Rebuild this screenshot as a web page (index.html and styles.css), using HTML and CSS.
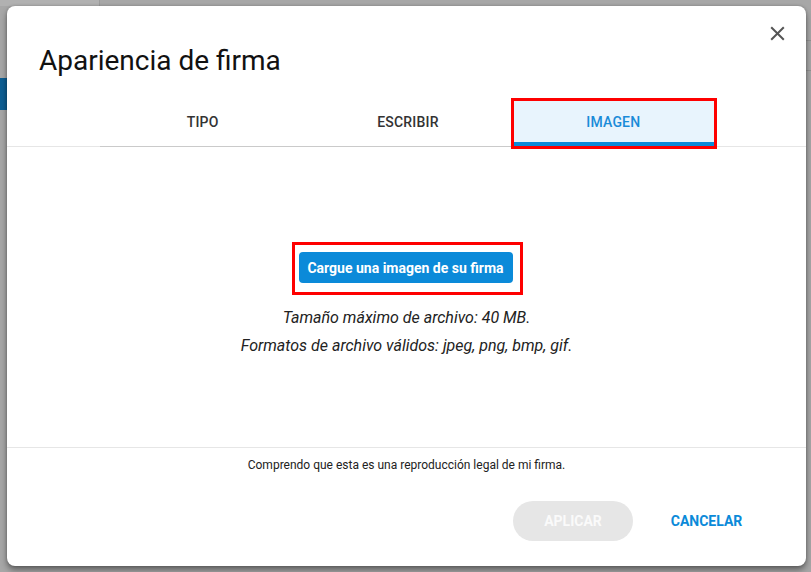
FILE: index.html
```html
<!DOCTYPE html>
<html lang="es">
<head>
<meta charset="utf-8">
<title>Apariencia de firma</title>
<link rel="stylesheet" href="styles.css">
</head>
<body>
  <div class="app">
    <div class="app-top">
      <div class="app-top-card"></div>
    </div>
    <div class="app-body">
      <div class="app-nav">
        <div class="app-nav-item"></div>
      </div>
      <div class="app-main">
        <div class="app-rule app-rule-1"></div>
        <div class="app-rule app-rule-2"></div>
      </div>
    </div>
  </div>

  <div class="overlay">
    <div class="dialog" role="dialog" aria-labelledby="dlg-title">
      <div class="dialog-header">
        <h1 id="dlg-title" class="dialog-title">Apariencia de firma</h1>
        <button class="close-btn" aria-label="Cerrar">
          <svg width="15" height="15" viewBox="0 0 15 15">
            <path d="M1.2 1.2 L13.8 13.8 M13.8 1.2 L1.2 13.8" stroke="#555" stroke-width="2" fill="none"/>
          </svg>
        </button>
      </div>

      <div class="tabs-wrap">
        <div class="tabs">
          <div class="tab">TIPO</div>
          <div class="tab">ESCRIBIR</div>
          <div class="tab tab-active">IMAGEN<span class="mark mark-tab"></span></div>
        </div>
      </div>

      <div class="dialog-content">
        <div class="upload-mark">
          <button class="upload-btn">Cargue una imagen de su firma</button>
        </div>
        <p class="hint">Tamaño máximo de archivo: 40 MB.</p>
        <p class="hint">Formatos de archivo válidos: jpeg, png, bmp, gif.</p>
      </div>

      <div class="dialog-footer">
        <p class="legal">Comprendo que esta es una reproducción legal de mi firma.</p>
        <div class="actions">
          <button class="btn btn-apply" disabled>APLICAR</button>
          <button class="btn btn-cancel">CANCELAR</button>
        </div>
      </div>
    </div>
  </div>
</body>
</html>
```

FILE: styles.css
```css
* {
  box-sizing: border-box;
}

html, body {
  margin: 0;
  padding: 0;
  width: 811px;
  height: 572px;
  overflow: hidden;
}

body {
  font-family: Roboto, "Liberation Sans", Arial, sans-serif;
  background: #a7a7a7;
  position: relative;
}

/* dimmed application behind the dialog */
.app {
  height: 572px;
  display: flex;
  flex-direction: column;
}

.app-top {
  height: 6px;
  display: flex;
}

.app-top-card {
  width: 100px;
  background: #b1b1b1;
  border-right: 1px solid #9c9c9c;
}

.app-body {
  flex: 1;
  display: flex;
}

.app-nav {
  width: 8px;
  padding-top: 72px;
}

.app-nav-item {
  height: 32px;
  background: #0d5e93;
}

.app-main {
  flex: 1;
  display: flex;
  flex-direction: column;
  align-items: flex-end;
}

.app-rule {
  width: 6px;
  height: 1px;
  background: #939393;
}

.app-rule-1 {
  margin-top: 34px;
}

.app-rule-2 {
  margin-top: 29px;
}

/* modal layer */
.overlay {
  position: absolute;
  inset: 0;
  padding: 6px 0 0 7px;
}

.dialog {
  width: 799px;
  height: 560px;
  background: #fff;
  border-radius: 8px;
  box-shadow: 0 4px 6px rgba(0, 0, 0, 0.42), 0 0 3px rgba(0, 0, 0, 0.2);
  display: flex;
  flex-direction: column;
}

.dialog-header {
  height: 92px;
  display: flex;
  align-items: flex-start;
  justify-content: space-between;
  padding: 0 14px 0 32px;
}

.dialog-title {
  margin: 39px 0 0 0;
  font-size: 28px;
  line-height: 32px;
  font-weight: 400;
  color: #111;
  letter-spacing: 0;
}

.close-btn {
  margin-top: 13px;
  width: 29px;
  height: 29px;
  padding: 0;
  border: 0;
  background: transparent;
  display: flex;
  align-items: center;
  justify-content: center;
}

/* tab strip */
.tabs-wrap {
  border-bottom: 1px solid #e6e6e6;
  padding-left: 93px;
}

.tabs {
  width: 616px;
  display: flex;
  margin-bottom: -1px;
  border-bottom: 1px solid #cacaca;
}

.tab {
  flex: 1;
  height: 48px;
  display: flex;
  align-items: center;
  justify-content: center;
  font-size: 14px;
  font-weight: 500;
  color: #333;
  letter-spacing: 0.2px;
  position: relative;
}

.tab-active {
  color: #1a8bd8;
  background: #e8f4fd;
  box-shadow: inset 0 -4px 0 #0b8ad9;
}

.mark {
  position: absolute;
  border: 3px solid #fe0000;
  pointer-events: none;
}

.mark-tab {
  top: 0;
  left: 0;
  right: -1px;
  bottom: -3px;
}

/* body */
.dialog-content {
  height: 300px;
  display: flex;
  flex-direction: column;
  align-items: center;
  padding-top: 95px;
}

.upload-mark {
  border: 3px solid #fe0000;
  padding: 7px 7px 9px 4px;
  margin-bottom: 9px;
  margin-left: 1px;
}

.upload-btn {
  display: block;
  width: 214px;
  height: 31px;
  border: 0;
  border-radius: 4px;
  background: #0b8ad9;
  color: #fff;
  font-family: inherit;
  font-size: 14px;
  font-weight: 700;
  padding: 0;
}

.hint {
  margin: 0;
  font-size: 16px;
  line-height: 28px;
  font-style: italic;
  color: #222;
}

/* footer */
.dialog-footer {
  border-top: 1px solid #e6e6e6;
  display: flex;
  flex-direction: column;
  align-items: center;
}

.legal {
  margin: 9px 0 0 0;
  font-size: 12px;
  line-height: 16px;
  color: #222;
}

.actions {
  align-self: stretch;
  display: flex;
  justify-content: flex-end;
  gap: 14px;
  padding: 28px 40px 0 0;
}

.btn {
  height: 40px;
  border: 0;
  border-radius: 20px;
  font-family: inherit;
  font-size: 14px;
  font-weight: 700;
  padding: 0;
}

.btn-apply {
  width: 120px;
  background: #e6e6e6;
  color: #fafafa;
}

.btn-cancel {
  width: 119px;
  background: transparent;
  color: #0b8ad9;
}
```
